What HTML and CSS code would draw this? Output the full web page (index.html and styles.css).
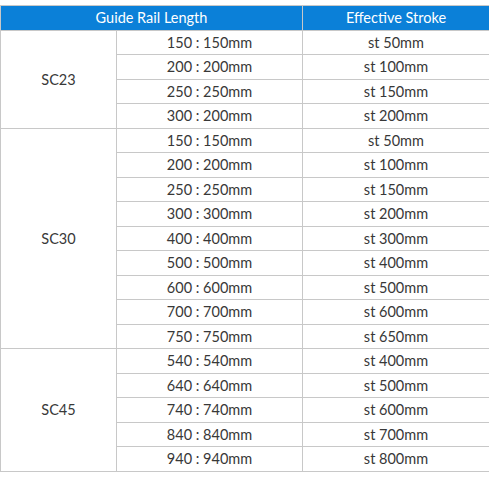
FILE: index.html
```html
<!DOCTYPE html>
<html>
<head>
<meta charset="utf-8">
<link rel="stylesheet" href="styles.css">
</head>
<body>
<table class="spec">
  <colgroup><col class="c1"><col class="c2"><col class="c3"></colgroup>
  <thead>
    <tr><th colspan="2">Guide Rail Length</th><th>Effective Stroke</th></tr>
  </thead>
  <tbody>
    <tr><td rowspan="4">SC23</td><td>150 : 150mm</td><td>st 50mm</td></tr>
    <tr><td>200 : 200mm</td><td>st 100mm</td></tr>
    <tr><td>250 : 250mm</td><td>st 150mm</td></tr>
    <tr><td>300 : 200mm</td><td>st 200mm</td></tr>
    <tr><td rowspan="9">SC30</td><td>150 : 150mm</td><td>st 50mm</td></tr>
    <tr><td>200 : 200mm</td><td>st 100mm</td></tr>
    <tr><td>250 : 250mm</td><td>st 150mm</td></tr>
    <tr><td>300 : 300mm</td><td>st 200mm</td></tr>
    <tr><td>400 : 400mm</td><td>st 300mm</td></tr>
    <tr><td>500 : 500mm</td><td>st 400mm</td></tr>
    <tr><td>600 : 600mm</td><td>st 500mm</td></tr>
    <tr><td>700 : 700mm</td><td>st 600mm</td></tr>
    <tr><td>750 : 750mm</td><td>st 650mm</td></tr>
    <tr><td rowspan="5">SC45</td><td>540 : 540mm</td><td>st 400mm</td></tr>
    <tr><td>640 : 640mm</td><td>st 500mm</td></tr>
    <tr><td>740 : 740mm</td><td>st 600mm</td></tr>
    <tr><td>840 : 840mm</td><td>st 700mm</td></tr>
    <tr><td>940 : 940mm</td><td>st 800mm</td></tr>
  </tbody>
</table>
</body>
</html>
```

FILE: styles.css
```css
html, body {
  margin: 0;
  padding: 0;
  background: #ffffff;
}
body {
  padding-top: 5px;
  font-family: Lato, "Noto Sans", sans-serif;
}
.spec {
  width: 489px;
  border-collapse: collapse;
  table-layout: fixed;
  font-size: 14.5px;
  color: #383838;
}
.c1 { width: 116px; }
.c2 { width: 186px; }
.c3 { width: 187px; }
.spec th,
.spec td {
  border: 1px solid #c8c8c8;
  height: 24.5px;
  padding: 0;
  text-align: center;
  vertical-align: middle;
  box-sizing: border-box;
}
.spec th {
  background: #0b80d8;
  color: #ffffff;
  font-weight: 400;
}
```
